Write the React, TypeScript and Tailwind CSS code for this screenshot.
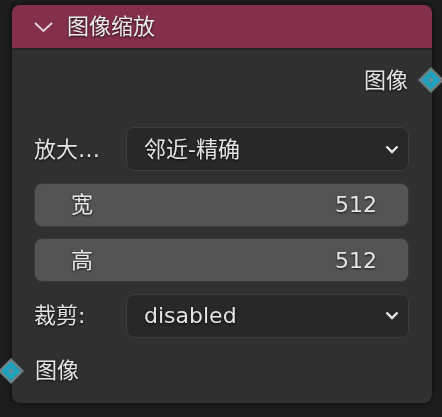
const font = { fontFamily: '"DejaVu Sans", "Noto Sans CJK SC", sans-serif' };

function Socket({ className }: { className: string }) {
  return (
    <div className={`absolute w-[18px] h-[18px] rotate-45 bg-[#1ea2bc] border-2 border-[#7b7b7b] flex items-center justify-center ${className}`}>
      <div className="w-[4px] h-[4px] bg-[#6f8a92]" />
    </div>
  );
}

function Chevron() {
  return (
    <svg width="14" height="9" viewBox="0 0 14 9" className="shrink-0">
      <path d="M1.5 1.5 L7 7 L12.5 1.5" fill="none" stroke="#e8e8e8" strokeWidth="2.4" />
    </svg>
  );
}

function Select({ label, value }: { label: string; value: string }) {
  return (
    <div className="flex items-center h-[44px]">
      <span className="w-[92px] text-[22px] text-[#e4e4e4] drop-shadow-[0_1px_1px_rgba(0,0,0,0.8)]">{label}</span>
      <div className="flex-1 h-full flex items-center justify-between pl-[17px] pr-[9px] bg-[#282828] border border-[#3d3d3d] rounded-[8px]">
        <span className="text-[22px] text-[#e4e4e4] drop-shadow-[0_1px_1px_rgba(0,0,0,0.8)]">{value}</span>
        <Chevron />
      </div>
    </div>
  );
}

function NumField({ label, value }: { label: string; value: string }) {
  return (
    <div className="h-[44px] flex items-center justify-between pl-[36px] pr-[31px] bg-[#545454] border border-[#3a3a3a] rounded-[8px] text-[22px] text-[#e6e6e6]">
      <span className="drop-shadow-[0_1px_1px_rgba(0,0,0,0.7)]">{label}</span>
      <span className="drop-shadow-[0_1px_1px_rgba(0,0,0,0.7)]">{value}</span>
    </div>
  );
}

export default function App() {
  return (
    <div className="w-[442px] h-[417px] bg-[#1d1d1d] pt-[5px] pl-[12px] overflow-hidden" style={font}>
      <div className="relative w-[420px] h-[398px] bg-[#303030] rounded-[8px] shadow-[0_0_6px_rgba(0,0,0,0.6)]">
        <div className="h-[45px] bg-[#84304b] rounded-t-[8px] border-b-2 border-[#242424] flex items-center pl-[22px] gap-[14px]">
          <svg width="19" height="10" viewBox="0 0 19 10">
            <path d="M1 1 L9.5 9 L18 1" fill="none" stroke="#e6d6db" strokeWidth="1.8" />
          </svg>
          <span className="text-[22px] text-[#ececec] drop-shadow-[0_1px_1px_rgba(0,0,0,0.8)]">图像缩放</span>
        </div>

        <div className="relative h-[60px] flex items-center justify-end pr-[24px]">
          <span className="text-[22px] text-[#e4e4e4] drop-shadow-[0_1px_1px_rgba(0,0,0,0.8)]">图像</span>
          <Socket className="right-[-8px] top-[21px]" />
        </div>

        <div className="flex flex-col gap-[11.5px] pl-[22px] pr-[23px] pt-[17px]">
          <Select label="放大…" value="邻近-精确" />
          <NumField label="宽" value="512" />
          <NumField label="高" value="512" />
          <Select label="裁剪:" value="disabled" />
        </div>

        <div className="relative h-[65px] flex items-center pl-[23px]">
          <span className="text-[22px] text-[#e4e4e4] drop-shadow-[0_1px_1px_rgba(0,0,0,0.8)]">图像</span>
          <Socket className="left-[-10px] top-[24px]" />
        </div>
      </div>
    </div>
  );
}
